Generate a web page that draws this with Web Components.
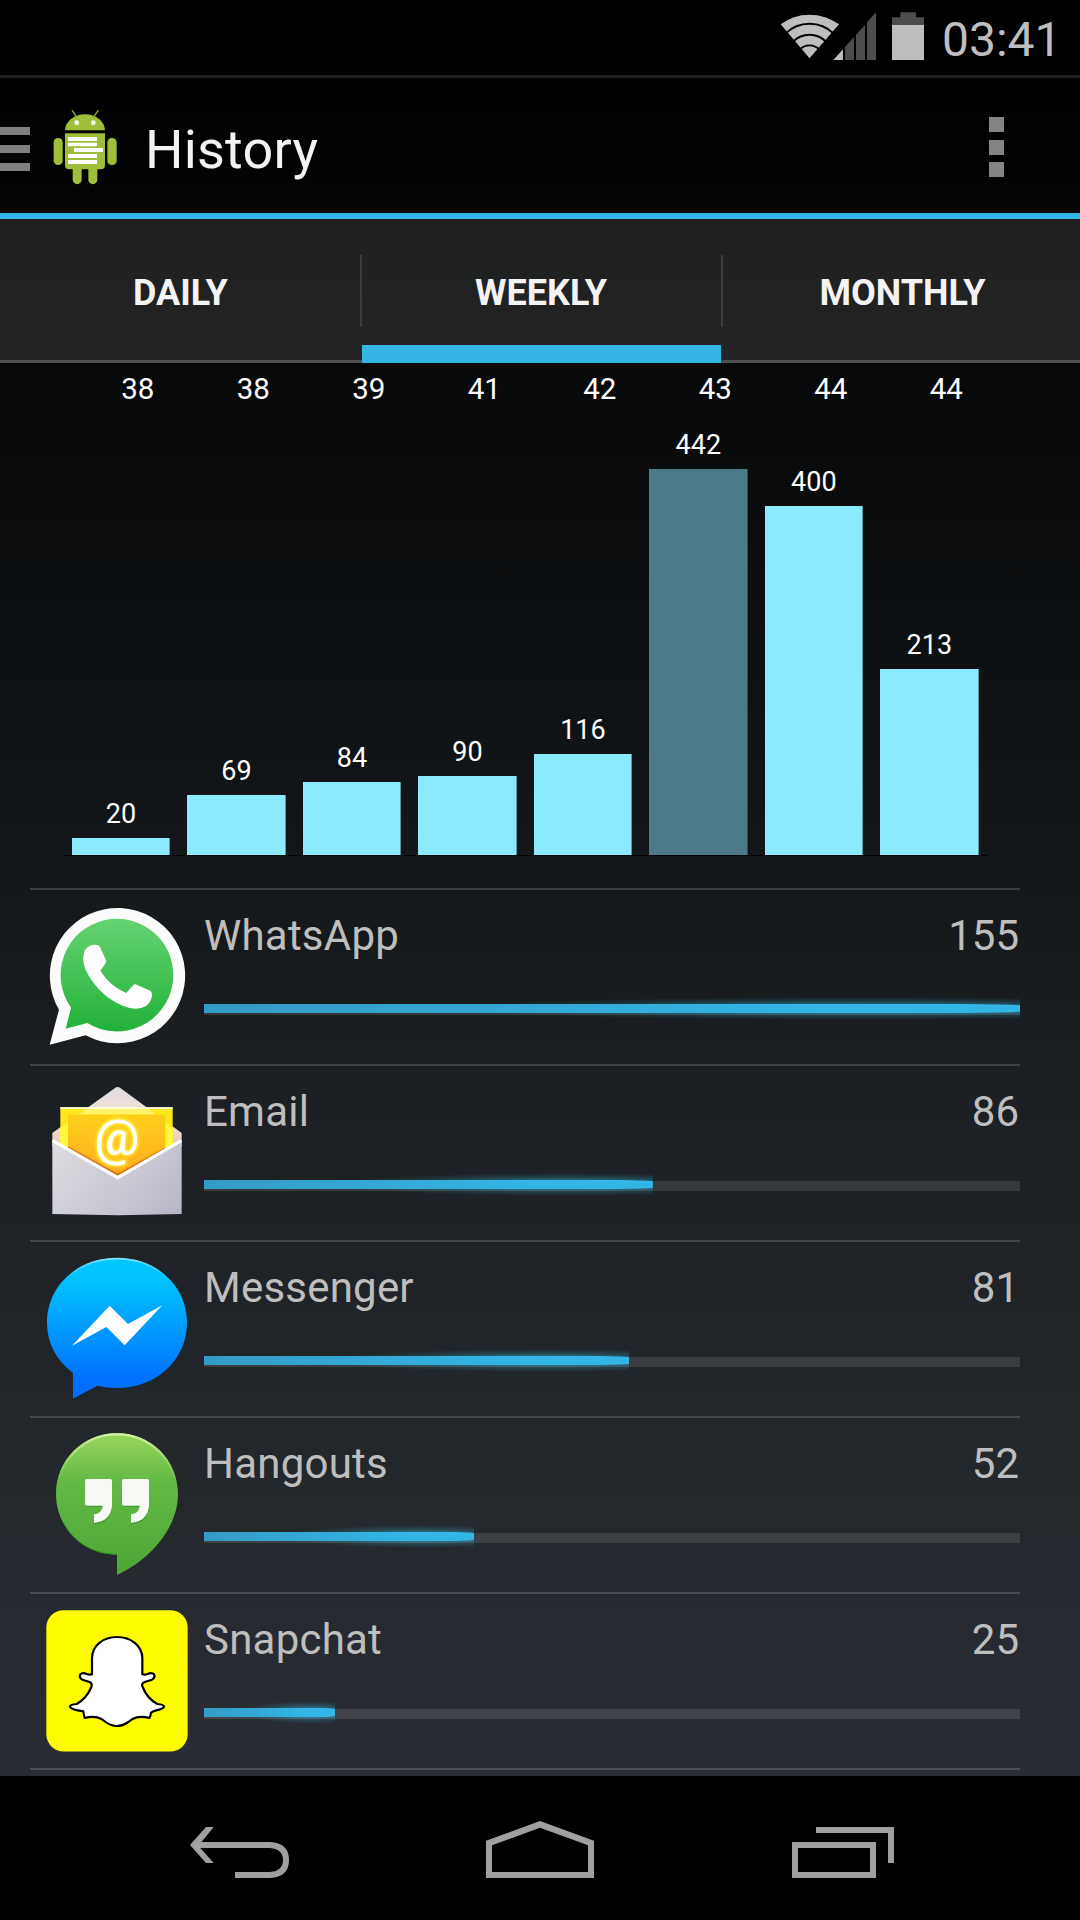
<!DOCTYPE html>
<html lang="en">
<head>
<meta charset="utf-8">
<title>History</title>
<style>
html,body{margin:0;padding:0;background:#000}
body{width:1080px;height:1920px;overflow:hidden;font-family:Roboto,"Liberation Sans",sans-serif}
</style>
</head>
<body>
<history-screen></history-screen>
<script>
const define = (name, html) => customElements.define(name, class extends HTMLElement {
  constructor() {
    super();
    this.attachShadow({mode: 'open'});
  }
  connectedCallback() {
    this.shadowRoot.innerHTML = typeof html === 'function' ? html(this) : html;
  }
});

define('status-bar', `
<style>
:host{display:flex;justify-content:flex-end;align-items:flex-start;height:75px;background:#000;border-bottom:3px solid #1e1e1e;padding-right:25px;box-sizing:content-box}
svg{display:block;flex:none;margin-top:12px}
.signal{margin-left:-7px}
.battery{margin-left:15px}
time{font-size:48px;line-height:75px;padding-top:2px;color:#bebebe;margin-left:18px;width:113px;white-space:nowrap}
</style>
<svg width="60" height="50" viewBox="60 36 180 150">
  <path fill="#bebebe" d="M148.500 175L62 73Q100 44 148.500 44T237 73Z"/>
  <g fill="none" stroke="#000" stroke-width="5.500">
    <path d="M76 101A103 103 0 0 1 221 101"/><path d="M99 125A70 70 0 0 1 198 125"/><path d="M119 149A40 40 0 0 1 178 149"/>
  </g>
</svg>
<svg class="signal" width="44" height="50" viewBox="219 36 132 150">
  <path fill="#bebebe" d="M220 180L249 148V180Z"/>
  <path fill="#4d4d4d" d="M255 180V141L282 111V180ZM288 180V104L315 75V180ZM321 180V67L348 37V180Z"/>
</svg>
<svg class="battery" width="32" height="50" viewBox="396 36 96 150">
  <path fill="#4d4d4d" d="M396 75V52H421V37H468V52H492V75Z"/><path fill="#bebebe" d="M396 75H492V180H396Z"/>
</svg>
<time>03:41</time>`);

define('action-bar', `
<style>
:host{display:flex;align-items:center;height:135px;border-bottom:6px solid #33b5e5}
.drawer{display:flex;flex-direction:column;gap:10px;width:30px;padding-top:7px}
.drawer i{height:8px;background:#808080}
.logo{margin:3px 0 0 23px;display:block}
h1{margin:0 auto 0 27px;padding-top:9px;font-weight:400;font-size:54px;line-height:64px;color:#f3f3f3;letter-spacing:.2px}
.more{display:flex;flex-direction:column;gap:7.500px;width:15px;margin-right:76px;padding-top:3px}
.more i{height:15px;background:#848484}
</style>
<div class="drawer"><i></i><i></i><i></i></div>
<svg class="logo" width="65" height="76" viewBox="159 117 195 228">
  <g fill="#9fbf3b">
    <path d="M195 181A60 48 0 0 1 315 181Z"/>
    <path d="M195 190H315V286Q315 298 303 298H207Q195 298 195 286Z"/>
    <rect x="161" y="204" width="27" height="81" rx="13"/><rect x="322" y="204" width="28" height="81" rx="13"/>
    <path d="M218 296H245V329A13 13 0 0 1 218 329ZM265 296H292V329A13 13 0 0 1 265 329Z"/>
  </g>
  <path d="M217 122L229 140M294 122L282 140" stroke="#8fae35" stroke-width="4" stroke-linecap="round"/>
  <circle cx="230" cy="158" r="7" fill="#fff"/><circle cx="280" cy="158" r="7" fill="#fff"/>
  <path fill="#fff" d="M204 201H291V213H204ZM204 218H291V229H204ZM222 234H309V246H222ZM204 252H291V264H204ZM204 270H291V282H204Z"/>
</svg>
<h1><slot></slot></h1>
<div class="more"><i></i><i></i><i></i></div>`);

define('tab-item', `
<style>
:host{display:flex;align-items:center;justify-content:center;box-sizing:border-box;height:144px;padding-top:6px;border-bottom:3px solid #4f4f4f;font-weight:700;font-size:36px;color:#f3f3f3}
:host([selected]){border-bottom:18px solid #33b5e5;padding-top:21px;padding-right:1px}
</style><slot></slot>`);

define('tab-strip', `
<style>
:host{display:grid;grid-template-columns:360px 2px 359px 2px 357px;height:144px;background:linear-gradient(#1e201f,#232325)}
i{display:flex;align-items:center;border-bottom:3px solid #4f4f4f;box-sizing:border-box;height:144px}
i::before{content:"";width:2px;height:72px;margin-top:2px;background:#3b3c3d}
</style>
<tab-item style="padding-left:1px">DAILY</tab-item><i></i><tab-item selected>WEEKLY</tab-item><i></i><tab-item style="padding-left:2px">MONTHLY</tab-item>`);

define('chart-column', el => `
<style>
:host{flex:1;display:flex;flex-direction:column;justify-content:flex-end;padding:0 8.400px;color:#fff}
span{text-align:center;font-size:27px;line-height:32px;margin-bottom:8px}
i{display:block;box-sizing:border-box;height:${el.getAttribute('value') * 0.8735}px;background:${el.hasAttribute('selected') ? '#4a7b86' : '#8ceaff'};border-right:1px solid rgba(0,0,0,.35);background-clip:border-box}
</style>
<span>${el.getAttribute('value')}</span><i></i>`);

define('week-chart', `
<style>
:host{display:flex;flex-direction:column;height:525px}
.axis{display:flex;padding:8px 76px 0 80px;height:35px;font-size:29.500px;line-height:36px;color:#fff}
.axis span{flex:1;text-align:center}
.plot{display:flex;height:449px;margin:0 93px 0 63px;padding-left:.3px;border-bottom:1px solid #000}
</style>
<div class="axis"><span>38</span><span>38</span><span>39</span><span>41</span><span>42</span><span>43</span><span>44</span><span>44</span></div>
<div class="plot">
<chart-column value="20"></chart-column><chart-column value="69"></chart-column><chart-column value="84"></chart-column><chart-column value="90"></chart-column><chart-column value="116"></chart-column><chart-column value="442" selected></chart-column><chart-column value="400"></chart-column><chart-column value="213"></chart-column>
</div>`);

define('usage-bar', el => `
<style>
:host{display:grid;grid-template-rows:25px;width:816px}
:host>*{grid-area:1/1}
.track{height:10px;margin-top:9px;background:rgba(255,255,255,.115)}
.glow,.fill{width:${el.getAttribute('percent')}%}
.glow{height:25px;background:radial-gradient(55% 50% at 80% 50%,rgba(51,181,229,.45) 35%,rgba(51,181,229,.16) 65%,transparent 92%)}
.fill{height:9px;margin-top:8px;background:linear-gradient(90deg,#339cc6,#33b5e5 75%);clip-path:polygon(0 0,93% 0,99% 8%,100% 14%,100% 86%,99% 92%,93% 100%,0 100%)}
</style>
<div class="track"></div><div class="glow"></div><div class="fill"></div>`);

const icons = {
whatsapp: `<svg viewBox="75 75 432 432">
  <defs><linearGradient id="g" x1="0" y1="0" x2="0" y2="1"><stop stop-color="#65d372"/><stop offset="1" stop-color="#22b13a"/></linearGradient></defs>
  <path fill="#fcfcfc" d="M89 494L117 389A203 203 0 1 1 197 466Z"/>
  <path fill="url(#g)" d="M137 446L153 383A169 169 0 1 1 202 429Z"/>
  <path fill="#fff" d="M215 195Q236 193 240 201L259 243Q260 248 241 272Q269 318 319 339Q338 315 345 312L392 333Q396 336 396 346Q394 367 377 379Q348 394 308 377Q244 351 205 285Q183 250 192 217Q199 200 215 195Z"/></svg>`,
email: `<svg viewBox="75 63 432 432">
  <defs>
  <linearGradient id="l" x1="0" y1="0" x2="1" y2="1"><stop stop-color="#dedee2"/><stop offset="1" stop-color="#c4c3cf"/></linearGradient>
  <linearGradient id="r" x1="0" y1="0" x2="1" y2="1"><stop stop-color="#d4d4db"/><stop offset="1" stop-color="#b7b5c6"/></linearGradient>
  <linearGradient id="o" x1="0" y1="0" x2="0" y2="1"><stop stop-color="#ffd01c"/><stop offset="1" stop-color="#ffab1c"/></linearGradient>
  <linearGradient id="t" x1="0" y1="0" x2="0" y2="1"><stop stop-color="#dcdce1"/><stop offset=".5" stop-color="#fbe2d9"/><stop offset="1" stop-color="#e6c9c0"/></linearGradient>
  <filter id="b" x="-30%" y="-30%" width="160%" height="160%"><feGaussianBlur stdDeviation="5"/></filter></defs>
  <path fill="url(#t)" d="M97 219L285 84Q293 78 301 84L485 219V260H97Z"/>
  <path fill="#ffe71d" d="M121 142H458V270L292 350L121 262Z"/>
  <path fill="#fff46a" d="M178 163L207 142H377L407 163Z"/>
  <path fill="#fff" d="M121 142H458V146H121Z"/>
  <path fill="#fff93d" d="M121 205L144 187V270L121 258ZM458 205L436 187V270L458 258Z"/>
  <path fill="url(#o)" d="M144 164H436V268L293 348L144 268Z"/>
  <path fill="none" stroke="#db7613" stroke-width="6" d="M144 262L293 344L436 265"/>
  <path fill="url(#l)" d="M97 239L294 352V466L97 462Z"/><path fill="url(#r)" d="M485 239L293 352V466L485 462Z"/>
  <path fill="none" stroke="#fff" stroke-width="9" d="M98 242L293 353L484 242"/>
  <g font-family="Roboto" font-weight="500" font-size="150" text-anchor="middle">
  <text x="291" y="285" fill="#fff64c" stroke="#fff23c" stroke-width="8" filter="url(#b)" aria-hidden="true">@</text><text x="291" y="285" fill="#fff">@</text></g></svg>`,
messenger: `<svg viewBox="75 66 432 432">
  <defs><linearGradient id="g" x1="0" y1="0" x2="0" y2="1"><stop stop-color="#00c8ff"/><stop offset=".15" stop-color="#00c3ff"/><stop offset=".85" stop-color="#0072ff"/><stop offset="1" stop-color="#006cff"/></linearGradient>
  <linearGradient id="h" x1="0" y1="0" x2="0" y2="1"><stop stop-color="#7fe0ff"/><stop offset=".3" stop-color="#7fe0ff" stop-opacity="0"/></linearGradient></defs>
  <path fill="url(#g)" d="M159 491V414C108 374 81 324 81 263C81 152 173 69 291 69S501 152 501 263S409 459 291 459Q260 459 232 452Z"/>
  <path fill="none" stroke="url(#h)" stroke-width="5" d="M83 263C83 153 175 71 291 71S499 153 499 263"/>
  <path fill="#fff" d="M156 332L269 212L324 267L427 211L314 331L259 276Z"/></svg>`,
hangouts: `<svg viewBox="75 69 432 432">
  <defs><linearGradient id="g" x1="0" y1="0" x2="0" y2="1"><stop stop-color="#97d65c"/><stop offset=".35" stop-color="#62b945"/><stop offset="1" stop-color="#4da535"/></linearGradient>
  <linearGradient id="h" x1="0" y1="0" x2="0" y2="1"><stop stop-color="#d3efa5"/><stop offset=".8" stop-color="#b0df7a" stop-opacity="0"/></linearGradient></defs>
  <path fill="url(#g)" d="M291 495V434C188 434 108 352 108 252C108 149 190 69 291 69S474 149 474 252C474 350 394 448 291 495Z"/>
  <path fill="none" stroke="url(#h)" stroke-width="7" d="M112 245C114 150 195 73 291 73S468 150 470 245"/>
  <path fill="none" stroke="#328f20" stroke-width="3" d="M130 337C160 397 220 432 289 432"/>
  <path fill="#2f8a20" opacity=".65" transform="translate(0 4)" d="M200 207H271Q276 207 276 212V286Q273 334 222 339V313Q247 309 248 287H200Q195 287 195 282V212Q195 207 200 207ZM311 207H382Q387 207 387 212V286Q384 334 333 339V313Q358 309 359 287H311Q306 287 306 282V212Q306 207 311 207Z"/>
  <path fill="#f8fbf5" d="M200 207H271Q276 207 276 212V286Q273 334 222 339V313Q247 309 248 287H200Q195 287 195 282V212Q195 207 200 207ZM311 207H382Q387 207 387 212V286Q384 334 333 339V313Q358 309 359 287H311Q306 287 306 282V212Q306 207 311 207Z"/></svg>`,
snapchat: `<svg viewBox="75 72 432 432">
  <rect x="79" y="75.500" width="424" height="424" rx="52" fill="#fffc00"/>
  <path fill="#fff" stroke="#000" stroke-width="6.500" stroke-linejoin="round" d="M216 268V220C216 181 250 156 291 156S367 181 367 220V268Q374 270 383 267Q395 261 402 268Q407 278 396 284L374 291Q362 296 368 306Q381 340 412 357Q432 359 432 364Q432 372 409 376Q397 379 393 383Q392 394 388 399Q369 394 350 397Q338 400 325 411Q308 423 291 423Q273 423 257 411Q244 400 232 397Q213 394 194 399Q192 392 190 379Q183 378 173 376Q150 372 150 364Q150 359 170 357Q200 340 214 306Q218 296 209 291L187 284Q176 278 181 268Q188 261 200 267Q209 270 216 268Z"/></svg>`
};

define('app-icon', el => `<style>:host{display:block;width:144px;height:144px}svg{display:block;width:100%;height:100%}</style>${icons[el.getAttribute('name')]}`);

define('app-row', el => `
<style>
:host{display:flex;box-sizing:border-box;height:176px;border-top:2px solid rgba(255,255,255,.16);padding-left:15px}
app-icon{margin-top:15px;margin-right:15px}
.body{width:816px;padding-top:21px}
.label{display:flex;justify-content:space-between;font-size:42px;line-height:50px;height:50px;color:#bebebe;margin-bottom:35px;padding-right:1px}
.name{letter-spacing:.22px}
</style>
<app-icon name="${el.getAttribute('icon')}"></app-icon>
<div class="body"><div class="label"><span class="name"><slot></slot></span><span>${el.getAttribute('count')}</span></div>
<usage-bar percent="${el.getAttribute('percent')}"></usage-bar></div>`);

define('app-list', `
<style>:host{display:block;margin:0 60px 0 30px;height:888px}
:host::after{content:"";display:block;height:2px;background:rgba(255,255,255,.16)}</style>
<app-row icon="whatsapp" count="155" percent="100">WhatsApp</app-row>
<app-row icon="email" count="86" percent="55">Email</app-row>
<app-row icon="messenger" count="81" percent="52.1">Messenger</app-row>
<app-row icon="hangouts" count="52" percent="33.1">Hangouts</app-row>
<app-row icon="snapchat" count="25" percent="16.1">Snapchat</app-row>`);

define('nav-bar', `
<style>:host{display:flex;align-items:flex-start;height:99px;padding:45px 186px 0 189px;justify-content:space-between;background:#000}svg{display:block;fill:#a0a0a0}.home{margin-right:1px}</style>
<svg width="100" height="57" viewBox="189 1821 100 57"><path d="M206 1827H213.700L201.500 1842H270Q289 1843 289 1860T270 1878H235V1872H270Q283 1871 283 1860T270 1848H200.300L213.700 1863H206L190 1845Z"/></svg>
<svg class="home" width="108" height="57" viewBox="486 1821 108 57"><path fill-rule="evenodd" d="M486 1840.700L540 1821L594 1840.700V1878H486ZM492 1845.300V1872H588V1845.300L540 1827.700Z"/></svg>
<svg width="102" height="57" viewBox="792 1821 102 57"><path fill-rule="evenodd" d="M792 1842H876V1878H792ZM798 1848V1872H870V1848ZM816 1827H894V1863H888V1833H816Z"/></svg>`);

define('history-screen', `
<style>
:host{display:flex;flex-direction:column;width:1080px;height:1920px}
main{height:1698px;background:linear-gradient(#000,#08090b 18%,#14181a 48%,#1b1e22 58%,#22272b 80%,#2a2d35)}
</style>
<status-bar></status-bar>
<main><action-bar>History</action-bar><tab-strip></tab-strip><week-chart></week-chart><app-list></app-list></main>
<nav-bar></nav-bar>`);
</script>
</body>
</html>
